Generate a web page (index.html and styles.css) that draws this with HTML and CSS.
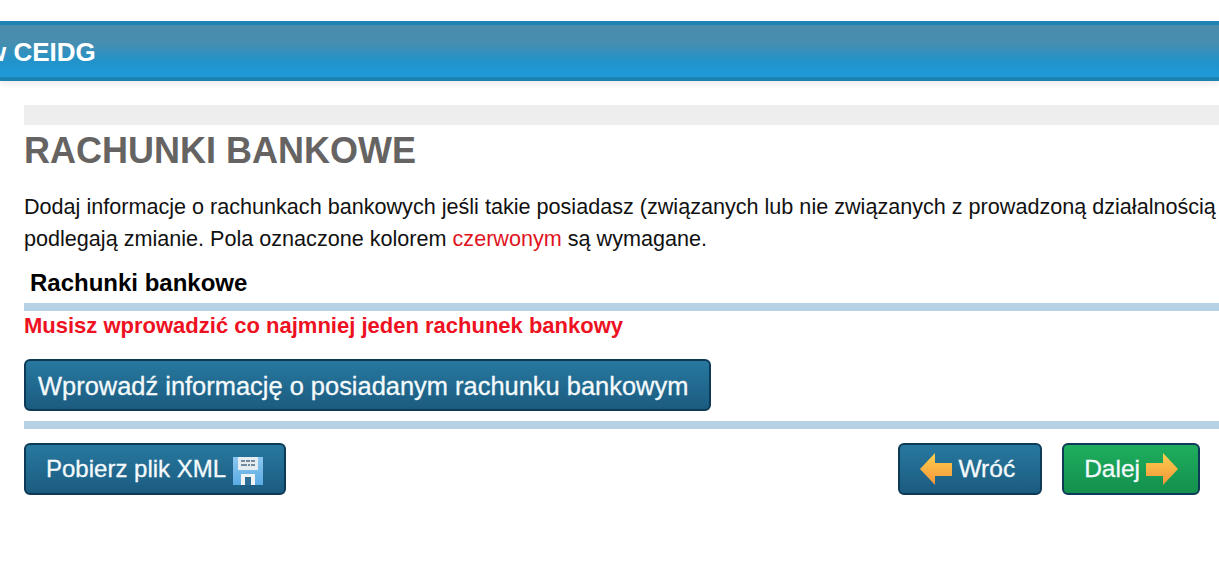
FILE: index.html
```html
<!DOCTYPE html>
<html lang="pl">
<head>
    <meta charset="UTF-8">
    <meta name="viewport" content="width=device-width, initial-scale=1.0">
    <title>Rachunki bankowe</title>
    <link rel="stylesheet" href="styles.css">
</head>
<body>
    <div class="header">
        <div class="header-title">w CEIDG</div>
    </div>
    <div class="content">
        <div class="grey-bar"></div>
        <h1>RACHUNKI BANKOWE</h1>
        <p class="intro">Dodaj informacje o rachunkach bankowych jeśli takie posiadasz (związanych lub nie związanych z prowadzoną działalnością<br>podlegają zmianie. Pola oznaczone kolorem <span class="red">czerwonym</span> są wymagane.</p>
        <h2>Rachunki bankowe</h2>
        <div class="line"></div>
        <div class="error">Musisz wprowadzić co najmniej jeden rachunek bankowy</div>
        <button class="btn btn-add">Wprowadź informację o posiadanym rachunku bankowym</button>
        <div class="line line-bottom"></div>
        <div class="actions">
            <button class="btn btn-small btn-xml">Pobierz plik XML
                <svg class="icon disk" viewBox="0 0 30 30" width="30" height="30">
                    <defs>
                        <linearGradient id="disk" x1="0" y1="0" x2="0" y2="1">
                            <stop offset="0" stop-color="#8cc8f0"/>
                            <stop offset="1" stop-color="#5aabe4"/>
                        </linearGradient>
                    </defs>
                    <path d="M0 1h30v28H0z" fill="url(#disk)"/>
                    <path d="M5 1h20v13H5z" fill="#e6edf2"/>
                    <path d="M8 4h4v2H8zM13 4h4v2h-4zM18 4h4v2h-4zM8 8h6v2H8zM15 8h2v2h-2zM18 8h4v2h-4z" fill="#75899a"/>
                    <path d="M8 18h14v11H8z" fill="#eef3f6"/>
                    <path d="M12 21h6v8h-6z" fill="#2c6e94"/>
                </svg>
            </button>
            <div class="nav-buttons">
                <button class="btn btn-small btn-back">
                    <svg class="icon arrow" viewBox="0 0 32 32" width="32" height="32">
                        <defs>
                            <linearGradient id="arrow" x1="0" y1="0" x2="0" y2="1">
                                <stop offset="0" stop-color="#fdd04e"/>
                                <stop offset="1" stop-color="#f4953a"/>
                            </linearGradient>
                        </defs>
                        <path d="M0 16 15 0v10h17v13H15v9z" fill="url(#arrow)"/>
                    </svg>
                    Wróć
                </button>
                <button class="btn btn-small btn-next">Dalej
                    <svg class="icon arrow" viewBox="0 0 32 32" width="32" height="32">
                        <path d="M32 16 17 0v10H0v13h17v9z" fill="url(#arrow)"/>
                    </svg>
                </button>
            </div>
        </div>
    </div>
</body>
</html>
```

FILE: styles.css
```css
html, body {
    overflow: hidden;
}
body {
    margin: 0;
    height: 562px;
    background: #fff;
    font-family: "Liberation Sans", Arial, sans-serif;
    color: #000;
}
.header {
    margin-top: 21px;
    height: 52px;
    border-top: 4px solid #1d83b3;
    border-bottom: 4px solid #1d83b3;
    background: linear-gradient(#4a8cab, #468eb0 35%, #2193cb 70%, #1f9bd8);
    box-shadow: 0 3px 6px rgba(120, 120, 130, 0.15);
    overflow: hidden;
}
.header-title {
    margin-left: -14px;
    font-size: 26px;
    font-weight: bold;
    line-height: 54px;
    color: #fff;
}
.content {
    margin: 24px 0 0 24px;
    width: 1240px;
}
.grey-bar {
    height: 20px;
    background: #eeeeee;
}
h1 {
    margin: 0;
    padding-top: 6px;
    font-size: 36px;
    line-height: 40px;
    font-weight: bold;
    color: #666363;
}
.intro {
    margin: 20px 0 0;
    font-size: 21.6px;
    line-height: 32px;
    white-space: nowrap;
    color: #111;
}
.red {
    color: #e0141e;
}
h2 {
    margin: 13px 0 0;
    padding-left: 6px;
    font-size: 24px;
    line-height: 30px;
    font-weight: bold;
}
.line {
    height: 8px;
    margin-top: 5px;
    background: #b6d0e4;
}
.line-bottom {
    margin-top: 10px;
}
.error {
    margin-top: 3px;
    font-size: 22px;
    line-height: 24px;
    font-weight: bold;
    color: #ee1122;
}
.btn {
    display: block;
    height: 52px;
    padding: 2px 21px 0 12px;
    border: 2px solid #0f3a57;
    border-radius: 6px;
    background: linear-gradient(#27789f, #1c5b80);
    color: #f4fafc;
    font-family: "Liberation Sans", Arial, sans-serif;
    font-size: 25.45px;
    white-space: nowrap;
    -webkit-text-stroke: 0.3px #f4fafc;
}
.btn-add {
    margin-top: 21px;
}
.actions {
    display: flex;
    justify-content: space-between;
    margin-top: 14px;
    width: 1176px;
}
.nav-buttons {
    display: flex;
    gap: 20px;
}
.btn-small {
    display: flex;
    align-items: center;
    gap: 6px;
    padding: 0 20px;
    font-size: 24.5px;
}
.btn-xml {
    gap: 7px;
    padding: 0 21px 0 20px;
    font-size: 24px;
}
.btn-back {
    padding: 0 25px 0 20px;
}
.btn-next {
    padding: 0 20px;
    background: linear-gradient(#1fae5e, #13904d);
}
.icon {
    display: block;
}
.disk {
    margin-top: 4px;
    filter: blur(0.4px);
}
.arrow {
    filter: blur(0.6px);
}
```
